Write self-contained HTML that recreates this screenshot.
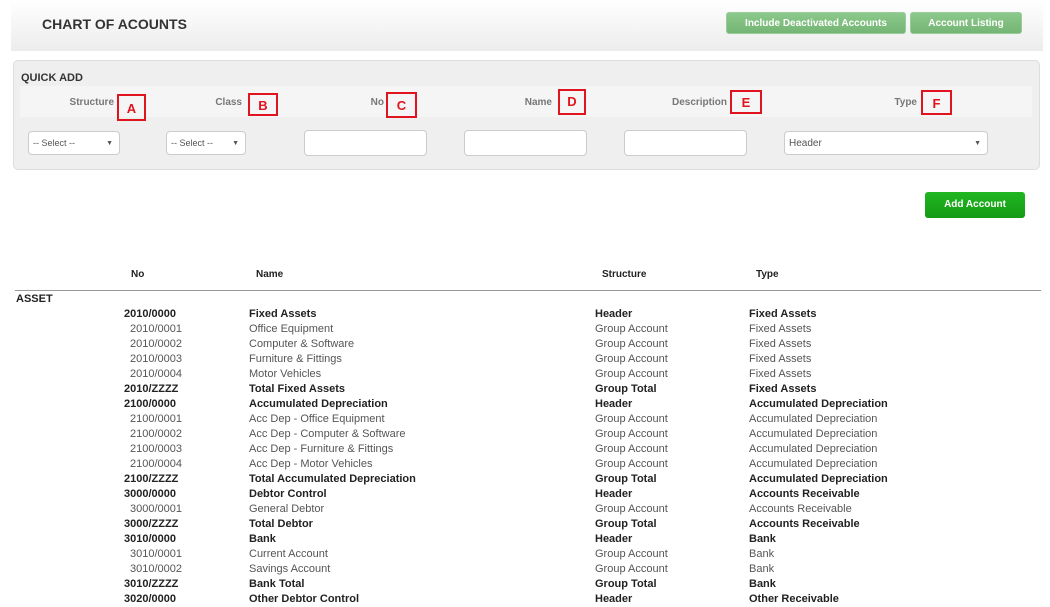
<!DOCTYPE html>
<html><head><style>
body{margin:0;width:1050px;height:607px;overflow:hidden;background:#fff;font-family:"Liberation Sans",sans-serif;position:relative}
.a{position:absolute}
.hdr{left:11px;top:0;width:1032px;height:51px;background:linear-gradient(#fff,#ececec)}
.title{left:42px;top:16px;font-size:14px;font-weight:bold;color:#333}
.gbtn{top:12px;height:22px;background:linear-gradient(#8cc98c,#74b574);border:1px solid #9c9;border-radius:3px;color:#fff;font-size:10px;font-weight:bold;text-align:center;line-height:22px;box-sizing:border-box}
.panel{left:13px;top:60px;width:1027px;height:110px;background:#efefef;border:1px solid #ddd;border-radius:5px;box-sizing:border-box}
.qa{left:21px;top:72px;font-size:11px;font-weight:bold;color:#333}
.lrow{left:20px;top:86px;width:1012px;height:31px;background:#f5f5f5}
.lbl{top:97px;font-size:10px;font-weight:bold;color:#777;text-align:right;width:120px}
.red{border:2px solid #e0141e;box-sizing:border-box;color:#e0141e;font-size:13px;font-weight:bold;text-align:center;line-height:21px}
.inp{background:#fff;border:1px solid #ccc;border-radius:4px;box-sizing:border-box;font-size:9px;color:#555;padding-left:4px;line-height:23px}
.inp span{position:absolute;right:6px;top:0;font-size:7px}
.add{left:925px;top:192px;width:100px;height:26px;background:linear-gradient(#22b622,#149a14);border-radius:3px;color:#fff;font-size:10px;font-weight:bold;text-align:center;line-height:26px}
.th{top:269px;font-size:10px;font-weight:bold;color:#222}
.line{left:15px;top:290px;width:1026px;height:1px;background:#999}
.r{position:absolute;font-size:11px;color:#555;white-space:nowrap;height:15px;line-height:15px}
.r.b{color:#222;font-weight:bold}
</style></head><body>
<div class="a hdr"></div>
<div class="a title">CHART OF ACOUNTS</div>
<div class="a gbtn" style="left:726px;width:180px">Include Deactivated Accounts</div>
<div class="a gbtn" style="left:910px;width:112px">Account Listing</div>
<div class="a panel"></div>
<div class="a qa">QUICK ADD</div>
<div class="a lrow"></div>
<div class="a lbl" style="left:-6px">Structure</div>
<div class="a lbl" style="left:122px">Class</div>
<div class="a lbl" style="left:264px">No</div>
<div class="a lbl" style="left:432px">Name</div>
<div class="a lbl" style="left:607px">Description</div>
<div class="a lbl" style="left:797px">Type</div>
<div class="a red" style="left:117px;top:94px;width:29px;height:27px;line-height:25px">A</div>
<div class="a red" style="left:248px;top:93px;width:30px;height:23px">B</div>
<div class="a red" style="left:386px;top:92px;width:31px;height:26px;line-height:24px">C</div>
<div class="a red" style="left:558px;top:89px;width:28px;height:26px">D</div>
<div class="a red" style="left:730px;top:90px;width:32px;height:24px">E</div>
<div class="a red" style="left:921px;top:90px;width:31px;height:25px;line-height:24px">F</div>
<div class="a inp" style="left:28px;top:131px;width:92px;height:24px">-- Select --<span>▼</span></div>
<div class="a inp" style="left:166px;top:131px;width:80px;height:24px">-- Select --<span>▼</span></div>
<div class="a inp" style="left:304px;top:130px;width:123px;height:26px"></div>
<div class="a inp" style="left:464px;top:130px;width:123px;height:26px"></div>
<div class="a inp" style="left:624px;top:130px;width:123px;height:26px"></div>
<div class="a inp" style="left:784px;top:131px;width:204px;height:24px;font-size:10px">Header<span>▼</span></div>
<div class="a add">Add Account</div>
<div class="a th" style="left:131px">No</div>
<div class="a th" style="left:256px">Name</div>
<div class="a th" style="left:602px">Structure</div>
<div class="a th" style="left:756px">Type</div>
<div class="a line"></div>
<div class="r b" style="left:16px;top:292px">ASSET</div>
<div id="rows"></div>
<script>
var d=[
[1,"2010/0000","Fixed Assets","Header","Fixed Assets"],
[0,"2010/0001","Office Equipment","Group Account","Fixed Assets"],
[0,"2010/0002","Computer & Software","Group Account","Fixed Assets"],
[0,"2010/0003","Furniture & Fittings","Group Account","Fixed Assets"],
[0,"2010/0004","Motor Vehicles","Group Account","Fixed Assets"],
[1,"2010/ZZZZ","Total Fixed Assets","Group Total","Fixed Assets"],
[1,"2100/0000","Accumulated Depreciation","Header","Accumulated Depreciation"],
[0,"2100/0001","Acc Dep - Office Equipment","Group Account","Accumulated Depreciation"],
[0,"2100/0002","Acc Dep - Computer & Software","Group Account","Accumulated Depreciation"],
[0,"2100/0003","Acc Dep - Furniture & Fittings","Group Account","Accumulated Depreciation"],
[0,"2100/0004","Acc Dep - Motor Vehicles","Group Account","Accumulated Depreciation"],
[1,"2100/ZZZZ","Total Accumulated Depreciation","Group Total","Accumulated Depreciation"],
[1,"3000/0000","Debtor Control","Header","Accounts Receivable"],
[0,"3000/0001","General Debtor","Group Account","Accounts Receivable"],
[1,"3000/ZZZZ","Total Debtor","Group Total","Accounts Receivable"],
[1,"3010/0000","Bank","Header","Bank"],
[0,"3010/0001","Current Account","Group Account","Bank"],
[0,"3010/0002","Savings Account","Group Account","Bank"],
[1,"3010/ZZZZ","Bank Total","Group Total","Bank"],
[1,"3020/0000","Other Debtor Control","Header","Other Receivable"]];
var h="";d.forEach(function(r,i){var t=307+i*15,c=r[0]?"r b":"r";
h+='<div class="'+c+'" style="left:'+(r[0]?124:130)+'px;top:'+t+'px">'+r[1]+'</div>';
h+='<div class="'+c+'" style="left:249px;top:'+t+'px">'+r[2].replace("&","&amp;")+'</div>';
h+='<div class="'+c+'" style="left:595px;top:'+t+'px">'+r[3]+'</div>';
h+='<div class="'+c+'" style="left:749px;top:'+t+'px">'+r[4]+'</div>';});
document.getElementById("rows").innerHTML=h;
</script>
</body></html>
